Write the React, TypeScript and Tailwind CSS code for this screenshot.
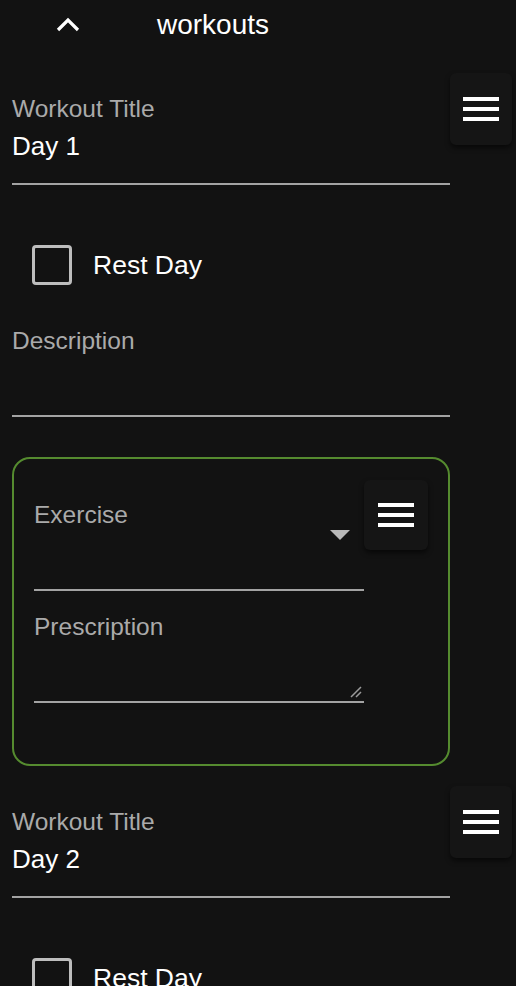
import React from 'react';

const Handle: React.FC<{ size: 'lg' | 'sm' }> = ({ size }) => (
  <div
    className={`flex flex-col items-center justify-center gap-[6px] rounded-[6px] bg-[#151515] shadow-[0_3px_5px_rgba(0,0,0,0.55)] ${
      size === 'lg' ? 'w-[62px] h-[72px] mt-[20px]' : 'w-[64px] h-[70px] mt-[21px]'
    }`}
  >
    <span className="block w-[36px] h-[4px] bg-white" />
    <span className="block w-[36px] h-[4px] bg-white" />
    <span className="block w-[36px] h-[4px] bg-white" />
  </div>
);

const Field: React.FC<{ label: string; value?: string; select?: boolean; textarea?: boolean }> = ({
  label,
  value,
  select,
  textarea,
}) => (
  <div className="w-full">
    <div className="pt-[2px] text-[24.5px] leading-[28px] text-[#aaaaaa]">{label}</div>
    <div className="relative h-[62px] border-b-2 border-[#a3a3a3] pt-[7px]">
      {value && <div className="text-[26px] leading-[32px] text-white">{value}</div>}
      {select && (
        <svg className="absolute right-[14px] top-[1px]" width="20" height="10" viewBox="0 0 20 10">
          <path d="M0 0h20L10 10z" fill="#b8b8b8" />
        </svg>
      )}
      {textarea && (
        <svg className="absolute right-[2px] bottom-[3px]" width="12" height="12" viewBox="0 0 12 12">
          <path d="M1 11L11 1M6 11L11 6" stroke="#9a9a9a" strokeWidth="1.5" />
        </svg>
      )}
    </div>
  </div>
);

const Workout: React.FC<{ title: string }> = ({ title }) => (
  <div className="flex items-start">
    <div className="w-[438px] pt-[40px]">
      <Field label="Workout Title" value={title} />

      <div className="mt-[60px] ml-[20px] flex h-[40px] items-center gap-[21px]">
        <div className="h-[40px] w-[40px] rounded-[4px] border-[3px] border-[#bdbdbd]" />
        <span className="text-[26.5px] leading-[32px] text-white">Rest Day</span>
      </div>

      <div className="mt-[40px]">
        <Field label="Description" />
      </div>

      <div className="mt-[40px] flex items-start rounded-[18px] border-2 border-[#558b2f] pl-[20px] pr-[20px] pb-[61px]">
        <div className="w-[330px] pt-[40px]">
          <Field label="Exercise" select />
          <div className="mt-[20px]">
            <Field label="Prescription" textarea />
          </div>
        </div>
        <Handle size="sm" />
      </div>
    </div>
    <Handle size="lg" />
  </div>
);

export default function App() {
  return (
    <div className="min-h-screen bg-[#121212] pl-[12px] font-['Liberation_Sans',Arial,sans-serif]">
      <div className="flex h-[53px] items-start">
        <svg className="ml-[44px] mt-[17px]" width="24" height="15" viewBox="0 0 24 15">
          <path d="M2 13L12 3l10 10" fill="none" stroke="white" strokeWidth="3.2" />
        </svg>
        <span className="ml-[77px] mt-[8px] text-[28px] leading-[34px] text-white">workouts</span>
      </div>
      <Workout title="Day 1" />
      <Workout title="Day 2" />
    </div>
  );
}
